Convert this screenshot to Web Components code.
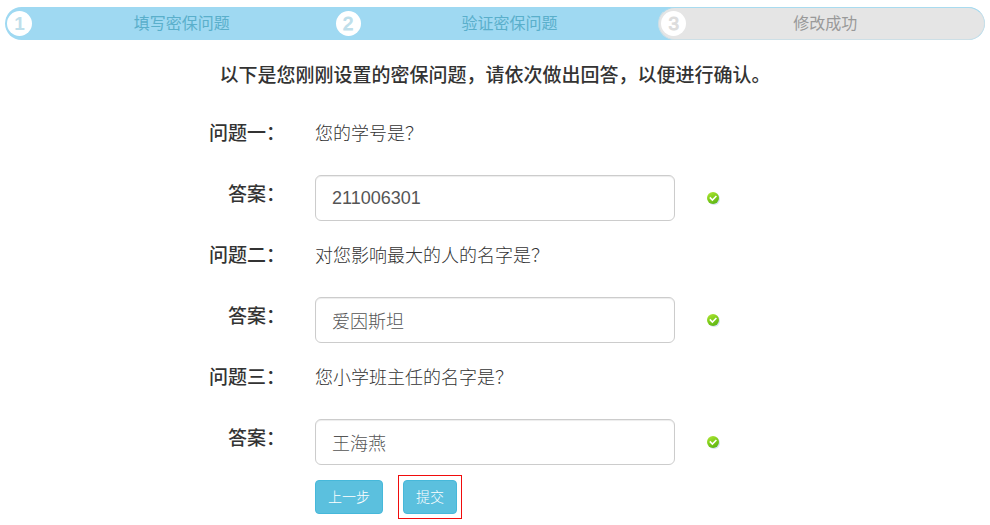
<!DOCTYPE html>
<html lang="zh-CN">
<head>
<meta charset="utf-8">
<title>密保问题</title>
<style>
body { margin: 0; background: #fff; color: #333; font-family: "Liberation Sans", "Noto Sans CJK SC", sans-serif; }
</style>
</head>
<body>
<security-page></security-page>
<script>
class BaseElement extends HTMLElement {
  constructor() {
    super();
    this.attachShadow({ mode: 'open' }).innerHTML = this.render();
  }
}

customElements.define('step-bar', class extends BaseElement {
  render() {
    return `<style>
      :host { display: grid; grid-template-columns: repeat(3, 1fr); box-sizing: border-box; height: 33px;
        border-radius: 17px; background: #9fd9f2; overflow: hidden; }
    </style><slot></slot>`;
  }
});

customElements.define('step-item', class extends BaseElement {
  render() {
    return `<style>
      :host { display: flex; align-items: center; box-sizing: border-box; padding-left: 2px;
        color: #5aafcb; font-size: 16px; line-height: 24px; }
      :host([middle]) { padding-left: 4px; }
      :host([pending]) { color: #999; background: #e5e5e5; border: 1px solid #cddfe6; border-top-color: #a9dbef;
        border-radius: 17px; padding-right: 20px; }
      .num { flex: none; display: grid; place-items: center; width: 25px; height: 25px; border-radius: 50%;
        background: #fff; color: #bfdfeb; font-size: 19px; font-weight: 700; }
      :host([middle]) .num, :host([pending]) .num { font-weight: 400; -webkit-text-stroke: 1px; }
      :host([pending]) .num { color: #ddd; }
      .label { flex: 1; text-align: center; font-weight: 400; }
    </style><span class="num"><slot name="num"></slot></span><span class="label"><slot></slot></span>`;
  }
});

customElements.define('form-row', class extends BaseElement {
  render() {
    return `<style>
      :host { display: grid; grid-template-columns: 1fr minmax(0, 360px) 1fr; column-gap: 30px;
        min-height: 46px; margin-bottom: 15px; }
    </style><slot></slot>`;
  }
});

customElements.define('check-icon', class extends BaseElement {
  render() {
    return `<style>
      :host { display: block; width: 16px; height: 16px; align-self: center; }
      svg { display: block; }
    </style>
    <svg width="16" height="16" viewBox="0 0 16 16" role="img" aria-label="通过">
      <defs><linearGradient id="g" x1="0" y1="0" x2="0.5" y2="1">
        <stop offset="0" stop-color="#b4e83c"/><stop offset=".5" stop-color="#86d11c"/><stop offset="1" stop-color="#62b818"/>
      </linearGradient></defs>
      <circle cx="9" cy="9" r="6" fill="#b9cfe8" opacity=".6"/>
      <circle cx="8" cy="8" r="6" fill="url(#g)"/>
      <path d="M4.8 7.4 7.4 10 11.4 6" fill="none" stroke="#fff" stroke-width="1.6"/>
    </svg>`;
  }
});

customElements.define('question-item', class extends BaseElement {
  render() {
    const q = this.getAttribute('question');
    return `<style>
      :host { display: block; }
      .name { padding-top: 6px; text-align: right; font-size: 19px; line-height: 28px; font-weight: 500; }
      .text { padding-top: 6px; font-size: 18px; line-height: 28px; font-weight: 300; }
      input { box-sizing: border-box; width: 100%; height: 46px; padding: 10px 16px; border: 1px solid #ccc;
        border-radius: 6px; background: #fff; box-shadow: inset 0 1px 1px rgba(0,0,0,.075);
        color: #555; font: 300 18px/24px "Liberation Sans", "Noto Sans CJK SC", sans-serif; outline: 0; }
      input:focus { border-color: #66afe9; }
    </style>
    <form-row><div class="name">${this.getAttribute('name')}：</div><div class="text" id="q">${q}</div></form-row>
    <form-row><label class="name" for="a">答案：</label>
      <input id="a" type="text" aria-describedby="q" value="${this.getAttribute('answer')}"><check-icon></check-icon></form-row>`;
  }
});

customElements.define('action-button', class extends BaseElement {
  render() {
    return `<style>
      :host { display: block; }
      :host([marked]) { outline: 1px solid #f00c0c; outline-offset: 4px; }
      button { display: block; box-sizing: border-box; margin: 0; padding: 6px 12px; border: 1px solid #46b8da; border-radius: 4px;
        background: #5bc0de; color: #fff; cursor: pointer;
        font: 300 14px/20px "Liberation Sans", "Noto Sans CJK SC", sans-serif; }
    </style><button type="button"><slot></slot></button>`;
  }
});

customElements.define('security-page', class extends BaseElement {
  render() {
    return `<style>
      :host { display: block; padding: 7px 5px 10px; }
      h1 { margin: 22px 0 24px; text-align: center; font-size: 19px; line-height: 28px; font-weight: 500; }
      .actions { grid-column: 2; display: flex; align-items: flex-start; gap: 20px; }
      .last { min-height: 34px; margin-bottom: 0; }
    </style>
    <step-bar>
      <step-item><span slot="num">1</span>填写密保问题</step-item>
      <step-item middle><span slot="num">2</span>验证密保问题</step-item>
      <step-item pending><span slot="num">3</span>修改成功</step-item>
    </step-bar>
    <h1>以下是您刚刚设置的密保问题，请依次做出回答，以便进行确认。</h1>
    <form>
      <question-item name="问题一" question="您的学号是？" answer="211006301"></question-item>
      <question-item name="问题二" question="对您影响最大的人的名字是？" answer="爱因斯坦"></question-item>
      <question-item name="问题三" question="您小学班主任的名字是？" answer="王海燕"></question-item>
      <form-row class="last"><div class="actions">
        <action-button>上一步</action-button>
        <action-button marked>提交</action-button>
      </div></form-row>
    </form>`;
  }
});
</script>
</body>
</html>
